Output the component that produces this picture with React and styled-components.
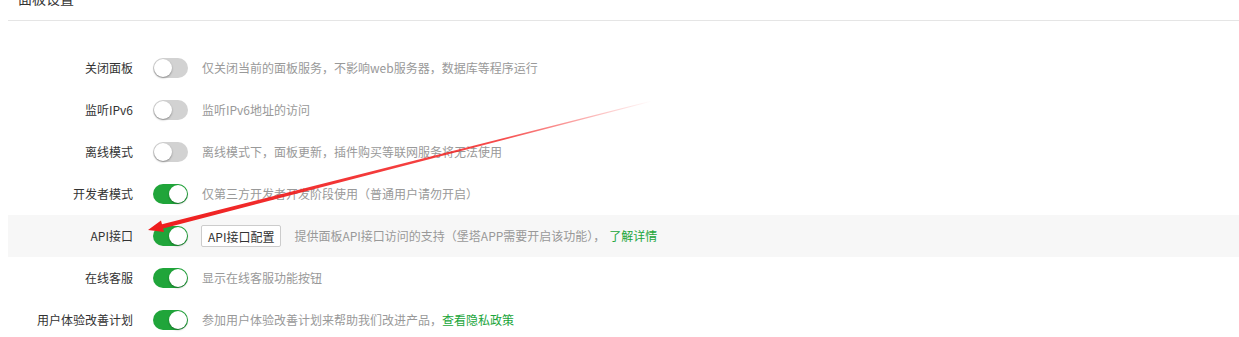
import styled, { createGlobalStyle } from 'styled-components';

const GlobalStyle = createGlobalStyle`
  html, body {
    margin: 0;
    padding: 0;
    background: #fff;
    overflow: hidden;
  }
  body {
    font-family: "Noto Sans CJK SC", "Noto Sans", sans-serif;
    font-size: 12px;
    color: #333;
  }
`;

const Page = styled.div`
  position: relative;
  width: 1239px;
  height: 337px;
  padding-left: 8px;
  box-sizing: border-box;
`;

const Header = styled.div`
  height: 20px;
  border-bottom: 1px solid #e5e5e5;
  overflow: hidden;
`;

const Title = styled.div`
  margin-top: -12px;
  padding-left: 10px;
  font-size: 14px;
  line-height: 20px;
  color: #333;
`;

const List = styled.div`
  margin-top: 26px;
  display: flex;
  flex-direction: column;
`;

const Row = styled.div`
  display: flex;
  align-items: center;
  height: 42px;
  background: ${(p) => (p.$active ? '#f7f7f7' : 'transparent')};
`;

const Label = styled.div`
  width: 125px;
  text-align: right;
  color: #333;
  line-height: 20px;
`;

const Switch = styled.span`
  position: relative;
  flex: none;
  width: 35px;
  height: 20px;
  margin-left: 20px;
  border-radius: 10px;
  background: ${(p) => (p.$on ? '#20a53a' : '#d2d2d2')};

  &::after {
    content: '';
    position: absolute;
    top: 1px;
    left: ${(p) => (p.$on ? '16px' : '1px')};
    width: 18px;
    height: 18px;
    border-radius: 50%;
    background: #fff;
    box-shadow: 0 1px 2px rgba(0, 0, 0, 0.35);
  }
`;

const ConfigButton = styled.button`
  margin-left: 13px;
  height: 22px;
  padding: 0 6px;
  font-family: inherit;
  font-size: 12px;
  color: #333;
  background: #fff;
  border: 1px solid #ccc;
  border-radius: 2px;
`;

const Desc = styled.div`
  margin-left: ${(p) => (p.$afterButton ? '13px' : '14px')};
  color: #999;
  line-height: 20px;
`;

const Link = styled.a`
  margin-left: ${(p) => (p.$spaced ? '4px' : '0')};
  color: #20a53a;
  text-decoration: none;
`;

const Arrow = styled.svg`
  position: absolute;
  left: 0;
  top: 0;
  pointer-events: none;
`;

const rows = [
  { label: '关闭面板', on: false, desc: '仅关闭当前的面板服务，不影响web服务器，数据库等程序运行' },
  { label: '监听IPv6', on: false, desc: '监听IPv6地址的访问' },
  { label: '离线模式', on: false, desc: '离线模式下，面板更新，插件购买等联网服务将无法使用' },
  { label: '开发者模式', on: true, desc: '仅第三方开发者开发阶段使用（普通用户请勿开启）' },
  { label: 'API接口', on: true, button: 'API接口配置', active: true, desc: '提供面板API接口访问的支持（堡塔APP需要开启该功能），', link: '了解详情', spaced: true },
  { label: '在线客服', on: true, desc: '显示在线客服功能按钮' },
  { label: '用户体验改善计划', on: true, desc: '参加用户体验改善计划来帮助我们改进产品，', link: '查看隐私政策' },
];

export default function App() {
  return (
    <>
      <GlobalStyle />
      <Page>
        <Header>
          <Title>面板设置</Title>
        </Header>
        <List>
          {rows.map((r) => (
            <Row key={r.label} $active={r.active}>
              <Label>{r.label}</Label>
              <Switch $on={r.on} />
              {r.button && <ConfigButton>{r.button}</ConfigButton>}
              <Desc $afterButton={!!r.button}>
                {r.desc}
                {r.link && <Link href="#" $spaced={r.spaced}>{r.link}</Link>}
              </Desc>
            </Row>
          ))}
        </List>
        <Arrow width="1239" height="337" viewBox="0 0 1239 337">
          <defs>
            <linearGradient id="arrowFade" gradientUnits="userSpaceOnUse" x1="652" y1="101" x2="148" y2="230">
              <stop offset="0" stopColor="#f41e1e" stopOpacity="0" />
              <stop offset="0.3" stopColor="#f41e1e" stopOpacity="0.8" />
              <stop offset="1" stopColor="#ee1c1c" stopOpacity="1" />
            </linearGradient>
          </defs>
          <path
            d="M652 101.4 L652 100.6 L162 224.2 L161 220.5 L148 230 L164 232.1 L163 228.4 Z"
            fill="url(#arrowFade)"
          />
        </Arrow>
      </Page>
    </>
  );
}
